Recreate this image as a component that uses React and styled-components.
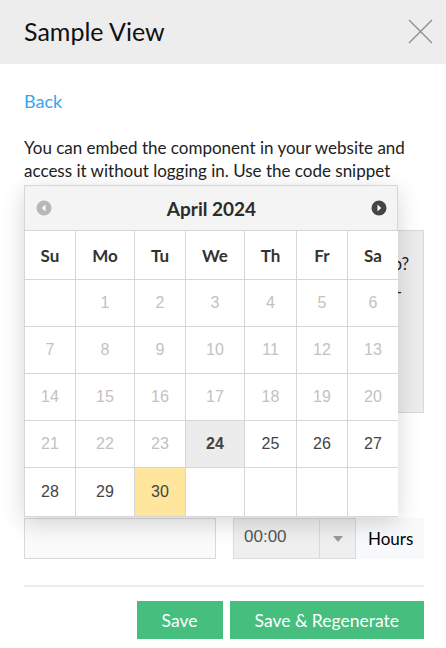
import React from 'react';
import styled, { createGlobalStyle } from 'styled-components';

const GlobalStyle = createGlobalStyle`
  html, body {
    margin: 0;
    padding: 0;
    background: #fff;
    font-family: Lato, "Open Sans", sans-serif;
    color: #222;
  }
  * { box-sizing: border-box; }
`;

const WEEKDAYS = ['Su', 'Mo', 'Tu', 'We', 'Th', 'Fr', 'Sa'];
const COLS = '50px 58px 50px 58px 51px 50px 50px';

const weeks = [
  [null, 1, 2, 3, 4, 5, 6],
  [7, 8, 9, 10, 11, 12, 13],
  [14, 15, 16, 17, 18, 19, 20],
  [21, 22, 23, 24, 25, 26, 27],
  [28, 29, 30, null, null, null, null],
];

const TODAY = 24;
const SELECTED = 30;

const App = () => (
  <>
    <GlobalStyle />
    <Panel>
      <Header>
        <Title>Sample View</Title>
        <CloseButton aria-label="Close">
          <svg width="25" height="25" viewBox="0 0 25 25">
            <path d="M1 1 L24 24 M24 1 L1 24" stroke="#8f8f8f" strokeWidth="1.4" fill="none" />
          </svg>
        </CloseButton>
      </Header>

      <Body>
        <BackLink href="#">Back</BackLink>
        <Intro>
          You can embed the component in your website and access it without logging in. Use the code snippet
          given below.
        </Intro>

        <CodeBox>
          <CodeLine>How do I embed this view in my portal or app?</CodeLine>
          <CodeLine $pad>-</CodeLine>
        </CodeBox>

        <FieldLabel>Link expires on</FieldLabel>

        <FieldRow>
          <DateField>
            <DateInput />
            <Calendar>
              <CalHeader>
                <NavIcon>
                  <svg width="16" height="16" viewBox="0 0 16 16">
                    <circle cx="8" cy="8" r="7.5" fill="#b8b8b8" />
                    <path d="M9.5 4.5 L5.8 8 L9.5 11.5 Z" fill="#fff" />
                  </svg>
                </NavIcon>
                <MonthTitle>April 2024</MonthTitle>
                <NavIcon>
                  <svg width="16" height="16" viewBox="0 0 16 16">
                    <circle cx="8" cy="8" r="7.5" fill="#454545" />
                    <path d="M6.5 4.5 L10.2 8 L6.5 11.5 Z" fill="#fff" />
                  </svg>
                </NavIcon>
              </CalHeader>
              <DayGrid>
                {WEEKDAYS.map((d) => (
                  <DayName key={d}>{d}</DayName>
                ))}
                {weeks.flat().map((n, i) => (
                  <DayCell
                    key={i}
                    $disabled={n !== null && n < TODAY}
                    $today={n === TODAY}
                    $selected={n === SELECTED}
                  >
                    {n}
                  </DayCell>
                ))}
              </DayGrid>
            </Calendar>
          </DateField>

          <TimeGroup>
            <TimeValue>00:00</TimeValue>
            <TimeArrow>
              <svg width="10" height="6" viewBox="0 0 10 6">
                <path d="M0 0 L10 0 L5 6 Z" fill="#9a9a9a" />
              </svg>
            </TimeArrow>
            <Addon>Hours</Addon>
          </TimeGroup>
        </FieldRow>

        <Divider />

        <Actions>
          <Button>Save</Button>
          <Button>Save &amp; Regenerate</Button>
        </Actions>
      </Body>
    </Panel>
  </>
);

const Panel = styled.div`
  width: 446px;
  min-height: 648px;
  background: #fff;
`;

const Header = styled.header`
  height: 64px;
  background: #ededed;
  display: flex;
  align-items: center;
  justify-content: space-between;
  padding: 0 13px 0 24px;
`;

const Title = styled.h1`
  margin: 0;
  font-size: 25px;
  font-weight: 400;
  color: #111;
  padding-bottom: 2px;
`;

const CloseButton = styled.button`
  border: 0;
  background: none;
  padding: 0;
  display: flex;
  cursor: pointer;
  margin-top: -1px;
`;

const Body = styled.div`
  padding: 0 22px 0 24px;
`;

const BackLink = styled.a`
  display: inline-block;
  margin-top: 25px;
  font-size: 18px;
  line-height: 24px;
  color: #38a6f0;
  text-decoration: none;
`;

const Intro = styled.p`
  margin: 23px 0 0;
  font-size: 17px;
  line-height: 23px;
  color: #222;
`;

const CodeBox = styled.div`
  margin-top: 25px;
  height: 183px;
  background: #ececec;
  border: 1px solid #d9d9d9;
  padding: 19px 14px;
`;

const CodeLine = styled.div`
  font-size: 17px;
  line-height: 28px;
  text-align: right;
  color: #222;
  padding-right: ${(p) => (p.$pad ? '7px' : '0')};
`;

const FieldLabel = styled.div`
  margin: 62px 0 20px;
  font-size: 17px;
  line-height: 23px;
`;

const FieldRow = styled.div`
  display: flex;
  align-items: stretch;
  gap: 17px;
  height: 41px;
`;

const DateField = styled.div`
  position: relative;
  width: 192px;
`;

const DateInput = styled.div`
  height: 100%;
  background: #fafafa;
  border: 1px solid #d9d9d9;
`;

const Calendar = styled.div`
  position: absolute;
  left: 0;
  bottom: calc(100% + 1px);
  width: 374px;
  background: #fff;
  border: 1px solid #d6d6d6;
  box-shadow: 0 6px 22px rgba(0, 0, 0, 0.16);
  z-index: 10;
`;

const CalHeader = styled.div`
  height: 45px;
  background: #f4f4f4;
  display: flex;
  align-items: center;
  justify-content: space-between;
  padding: 0 10px 0 11px;
  border-bottom: 1px solid #d6d6d6;
`;

const MonthTitle = styled.div`
  font-size: 19px;
  font-weight: 700;
  color: #2b2b2b;
`;

const NavIcon = styled.span`
  display: flex;
  width: 16px;
  height: 16px;
`;

const DayGrid = styled.div`
  display: grid;
  grid-template-columns: ${COLS};
  grid-template-rows: 48px repeat(4, 46px) 48px;
  gap: 1px;
  background: #d6d6d6;
`;

const DayName = styled.div`
  background: #fff;
  display: flex;
  align-items: center;
  justify-content: center;
  font-size: 17px;
  font-weight: 700;
  color: #333;
`;

const DayCell = styled.div`
  background: ${(p) => (p.$selected ? '#fee69d' : p.$today ? '#ececec' : '#fff')};
  display: flex;
  align-items: center;
  justify-content: center;
  font-family: "Liberation Sans", Arial, sans-serif;
  font-size: 16px;
  font-weight: ${(p) => (p.$today ? 700 : 400)};
  color: ${(p) => (p.$disabled ? '#c2c2c2' : '#444')};
`;

const TimeGroup = styled.div`
  flex: 1;
  display: flex;
`;

const TimeValue = styled.div`
  width: 86px;
  background: #efefef;
  border: 1px solid #dadada;
  border-right: 0;
  display: flex;
  align-items: center;
  padding-left: 10px;
  font-family: "Liberation Sans", Arial, sans-serif;
  font-size: 17px;
  color: #555;
  padding-bottom: 4px;
`;

const TimeArrow = styled.div`
  width: 37px;
  background: #efefef;
  border: 1px solid #dadada;
  display: flex;
  align-items: center;
  justify-content: center;
`;

const Addon = styled.div`
  flex: 1;
  background: #f8f9fb;
  display: flex;
  align-items: center;
  padding-left: 12px;
  font-size: 17px;
  color: #000;
`;

const Divider = styled.hr`
  margin: 26px 0 0;
  border: 0;
  height: 2px;
  background: #ececec;
`;

const Actions = styled.div`
  display: flex;
  justify-content: flex-end;
  gap: 7px;
  margin-top: 14px;
`;

const Button = styled.button`
  height: 38px;
  padding: 0 25px;
  border: 0;
  background: #45be7e;
  color: #fff;
  font-family: Lato, sans-serif;
  font-size: 17.5px;
  font-weight: 400;
  cursor: pointer;
`;

export default App;
